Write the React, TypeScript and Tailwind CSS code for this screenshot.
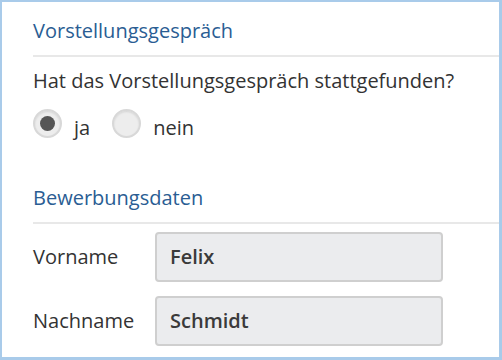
import { useState } from 'react'

export default function App() {
  const [stattgefunden, setStattgefunden] = useState('ja')

  return (
    <div className="w-[502px] h-[360px] bg-white border-t-2 border-l-2 border-b-[3px] border-r-[3px] border-[#a9cbea] font-['Open_Sans',sans-serif] text-[#333]">
      <div className="pl-[31px] pt-[15px]">
        <h2 className="text-[20px] leading-[28px] text-[#2a5d93]">Vorstellungsgespräch</h2>
        <div className="mt-[10px] h-[2px] bg-[#e8e8e8]"></div>

        <p className="mt-[11px] text-[20px] leading-[26px]">Hat das Vorstellungsgespräch stattgefunden?</p>

        <div className="mt-[11px] flex items-center">
          <RadioOption label="ja" checked={stattgefunden === 'ja'} onClick={() => setStattgefunden('ja')} />
          <RadioOption label="nein" checked={stattgefunden === 'nein'} onClick={() => setStattgefunden('nein')} />
        </div>

        <h2 className="mt-[43px] text-[20px] leading-[28px] text-[#2a5d93]">Bewerbungsdaten</h2>
        <div className="mt-[10px] h-[2px] bg-[#e8e8e8]"></div>

        <div className="mt-[8px] flex flex-col gap-[14px]">
          <Field label="Vorname" value="Felix" />
          <Field label="Nachname" value="Schmidt" />
        </div>
      </div>
    </div>
  )
}

function RadioOption({ label, checked, onClick }: { label: string; checked: boolean; onClick: () => void }) {
  return (
    <button onClick={onClick} className="flex items-center mr-[22px]">
      <span className="w-[29px] h-[29px] rounded-full bg-[#ededed] border-2 border-[#d8d8d8] shadow-[inset_0_1px_2px_rgba(0,0,0,0.1)] flex items-center justify-center">
        {checked && <span className="w-[15px] h-[15px] rounded-full bg-[#555]"></span>}
      </span>
      <span className="ml-[12px] mt-[10px] text-[20px] leading-[26px]">{label}</span>
    </button>
  )
}

function Field({ label, value }: { label: string; value: string }) {
  return (
    <div className="flex items-center">
      <span className="w-[122px] text-[20px] leading-[26px]">{label}</span>
      <div className="w-[288px] h-[50px] bg-[#ebecee] border-2 border-[#cfcfcf] rounded-[4px] px-[13px] flex items-center text-[20px] font-semibold text-[#3a3a3a]">
        {value}
      </div>
    </div>
  )
}
